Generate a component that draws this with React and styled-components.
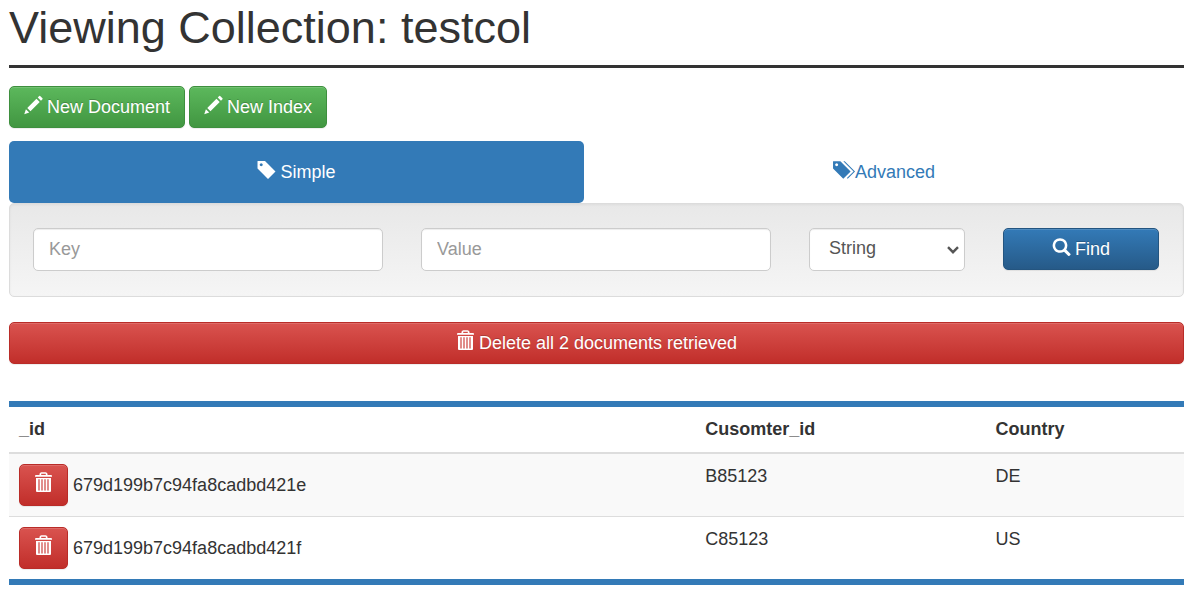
import React from "react";
import styled, { createGlobalStyle, css } from "styled-components";

const GlobalStyle = createGlobalStyle`
  *, *::before, *::after { box-sizing: border-box; }
  body {
    margin: 0;
    background: #fff;
    color: #333;
    font-family: "Liberation Sans", Arial, sans-serif;
    font-size: 18px;
    line-height: 25px;
  }
  input, select, button { font: inherit; }
`;

const Page = styled.main`
  padding: 0 9px;
`;

const Title = styled.h1`
  margin: 0 0 18px;
  padding: 3px 0 12px;
  border-bottom: 3px solid #333;
  font-size: 45px;
  font-weight: 400;
  line-height: 50px;
`;

const tones = {
  green: css`
    background: linear-gradient(#5cb85c, #419641);
    border-color: #3e8f3e;
  `,
  blue: css`
    background: linear-gradient(#337ab7, #265a88);
    border-color: #245580;
  `,
  red: css`
    background: linear-gradient(#d9534f, #c12e2a);
    border-color: #b92c28;
  `,
};

const Button = styled.button`
  display: ${(p) => (p.$wide ? "flex" : "inline-flex")};
  width: ${(p) => (p.$wide ? "100%" : "auto")};
  align-items: center;
  justify-content: center;
  gap: 4px;
  height: 42px;
  padding: 0 14px;
  border: 1px solid;
  border-radius: 5px;
  color: #fff;
  cursor: pointer;
  text-shadow: 0 -1px 0 rgba(0, 0, 0, 0.2);
  box-shadow: inset 0 1px 0 rgba(255, 255, 255, 0.15), 0 1px 1px rgba(0, 0, 0, 0.075);
  ${(p) => tones[p.$tone]}
`;

const Actions = styled.div`
  display: flex;
  gap: 4px;
  margin-bottom: 13px;
`;

const Tabs = styled.nav`
  display: grid;
  grid-template-columns: 23fr 24fr;
`;

const Tab = styled.a`
  display: flex;
  align-items: center;
  justify-content: center;
  gap: ${(p) => (p.$active ? "4px" : "0")};
  height: 62px;
  border-radius: 5px;
  text-decoration: none;
  color: ${(p) => (p.$active ? "#fff" : "#337ab7")};
  background: ${(p) => (p.$active ? "#337ab7" : "transparent")};
`;

const Well = styled.form`
  display: grid;
  grid-template-columns: repeat(12, 1fr);
  column-gap: 38px;
  margin-bottom: 25px;
  padding: 24px 24px 25px 23px;
  border: 1px solid #dcdcdc;
  border-radius: 5px;
  background: linear-gradient(#e8e8e8, #f5f5f5);
  box-shadow: inset 0 1px 3px rgba(0, 0, 0, 0.05), 0 1px 0 rgba(255, 255, 255, 0.1);
`;

const Field = styled.div`
  position: relative;
  display: grid;
  align-items: start;
  grid-column: span ${(p) => p.$span};
`;

const control = css`
  width: 100%;
  height: 43px;
  border: 1px solid #ccc;
  border-radius: 5px;
  background: #fff;
  color: #555;
  box-shadow: inset 0 1px 1px rgba(0, 0, 0, 0.075);
`;

const TextInput = styled.input`
  ${control}
  padding: 0 15px;
  &::placeholder { color: #999; opacity: 1; }
`;

const Select = styled.select`
  ${control}
  appearance: none;
  padding: 0 24px 2px 19px;
`;

const Chevron = styled.svg`
  position: absolute;
  top: 18px;
  right: 6px;
  pointer-events: none;
  fill: none;
  stroke: #555;
  stroke-width: 2.4;
`;

const Table = styled.table`
  width: 100%;
  margin-top: 37px;
  border-collapse: separate;
  border-spacing: 0;
  table-layout: fixed;
  border-top: 6px solid #337ab7;
  border-bottom: 6px solid #337ab7;
`;

const Col = styled.col`
  width: ${(p) => p.$width};
`;

const Th = styled.th`
  padding: 10px;
  border-bottom: 2px solid #ddd;
  text-align: left;
  font-weight: 700;
`;

const Body = styled.tbody`
  tr:nth-child(odd) { background: #f9f9f9; }
  tr + tr > td { border-top: 1px solid #ddd; }
`;

const Td = styled.td`
  padding: 10px;
  vertical-align: top;
`;

const IdCell = styled.div`
  display: flex;
  align-items: center;
  gap: 5px;
`;

const Svg = styled.svg`
  display: block;
  flex: none;
  margin-bottom: 4px;
  fill: currentColor;
`;

const Glyph = ({ width = 19, span = 1200, d }) => (
  <Svg width={width} height="18" viewBox={`0 0 ${span} 1200`} overflow="visible" aria-hidden="true">
    <path transform="matrix(1 0 0 -1 0 1200)" d={d} />
  </Svg>
);

const Pencil = () => (
  <Glyph d="M1011 1210q19 0 33 -13l153 -153q13 -14 13 -33t-13 -33l-99 -92l-214 214l95 96q13 14 32 14zM1013 800l-615 -614l-214 214l614 614zM317 96l-333 -112l110 335z" />
);

const Tag = () => (
  <Glyph d="M1 700v475q0 10 7.5 17.5t17.5 7.5h474l700 -700l-500 -500zM148 953q0 -42 29 -71q30 -30 71.5 -30t71.5 30q29 29 29 71t-29 71q-30 30 -71.5 30t-71.5 -30q-29 -29 -29 -71z" />
);

const Tags = () => (
  <Glyph
    width={22}
    span={1500}
    d="M2 700v475q0 11 7 18t18 7h474l700 -700l-500 -500zM148 953q0 -42 30 -71q29 -30 71 -30t71 30q30 29 30 71t-30 71q-29 30 -71 30t-71 -30q-30 -29 -30 -71zM701 1200h100l700 -700l-500 -500l-50 50l450 450z"
  />
);

const Search = () => (
  <Glyph d="M500 1191q100 0 191 -39t156.5 -104.5t104.5 -156.5t39 -191l-1 -2l1 -5q0 -141 -78 -262l275 -274q23 -26 22.5 -44.5t-22.5 -42.5l-59 -58q-26 -20 -46.5 -20t-39.5 20l-275 274q-119 -77 -261 -77l-5 1l-2 -1q-100 0 -191 39t-156.5 104.5t-104.5 156.5t-39 191t39 191t104.5 156.5t156.5 104.5t191 39zM500 1022q-88 0 -162 -43t-117 -117t-43 -162t43 -162t117 -117t162 -43t162 43t117 117t43 162t-43 162t-117 117t-162 43z" />
);

const Trash = () => (
  <Svg width="19" height="22" viewBox="-1 0 19 22" aria-hidden="true">
    <path fillRule="evenodd" d="M4.5 3 V1.8 Q5 0.2 6.4 0.2 H10.6 Q12 0.2 12.5 1.8 V3 H16 Q17 3 17 4 V4.8 H0 V4 Q0 3 1 3 Z M6.2 3 H10.8 V1.7 H6.2 Z" />
    <path fillRule="evenodd" d="M1 6 H16 V19 Q16 20 15 20 H2 Q1 20 1 19 Z M3.4 7.2 V18.4 H4.6 V7.2 Z M6.4 7.2 V18.4 H7.6 V7.2 Z M9.4 7.2 V18.4 H10.6 V7.2 Z M12.4 7.2 V18.4 H13.6 V7.2 Z" />
  </Svg>
);

const documents = [
  { id: "679d199b7c94fa8cadbd421e", customer: "B85123", country: "DE" },
  { id: "679d199b7c94fa8cadbd421f", customer: "C85123", country: "US" },
];

export default function App() {
  return (
    <Page>
      <GlobalStyle />
      <Title>Viewing Collection: testcol</Title>
      <Actions>
        <Button type="button" $tone="green"><Pencil />New Document</Button>
        <Button type="button" $tone="green"><Pencil />New Index</Button>
      </Actions>
      <Tabs>
        <Tab href="#simple" $active aria-current="page"><Tag />Simple</Tab>
        <Tab href="#advanced"><Tags />Advanced</Tab>
      </Tabs>
      <Well onSubmit={(e) => e.preventDefault()}>
        <Field $span={4}><TextInput type="text" placeholder="Key" aria-label="Key" /></Field>
        <Field $span={4}><TextInput type="text" placeholder="Value" aria-label="Value" /></Field>
        <Field $span={2}>
          <Select aria-label="Value type" defaultValue="String">
            <option>String</option>
          </Select>
          <Chevron width="12" height="8" viewBox="0 0 12 8" aria-hidden="true">
            <path d="M1 1.2 L6 6.2 L11 1.2" />
          </Chevron>
        </Field>
        <Field $span={2}><Button type="submit" $tone="blue" $wide><Search />Find</Button></Field>
      </Well>
      <Button type="button" $tone="red" $wide><Trash />Delete all 2 documents retrieved</Button>
      <Table>
        <colgroup>
          <Col $width="58.4%" />
          <Col $width="24.7%" />
          <Col $width="16.9%" />
        </colgroup>
        <thead>
          <tr>
            <Th scope="col">_id</Th>
            <Th scope="col">Cusomter_id</Th>
            <Th scope="col">Country</Th>
          </tr>
        </thead>
        <Body>
          {documents.map((doc) => (
            <tr key={doc.id}>
              <Td>
                <IdCell>
                  <Button type="button" $tone="red" aria-label={"Delete " + doc.id}><Trash /></Button>
                  {doc.id}
                </IdCell>
              </Td>
              <Td>{doc.customer}</Td>
              <Td>{doc.country}</Td>
            </tr>
          ))}
        </Body>
      </Table>
    </Page>
  );
}
